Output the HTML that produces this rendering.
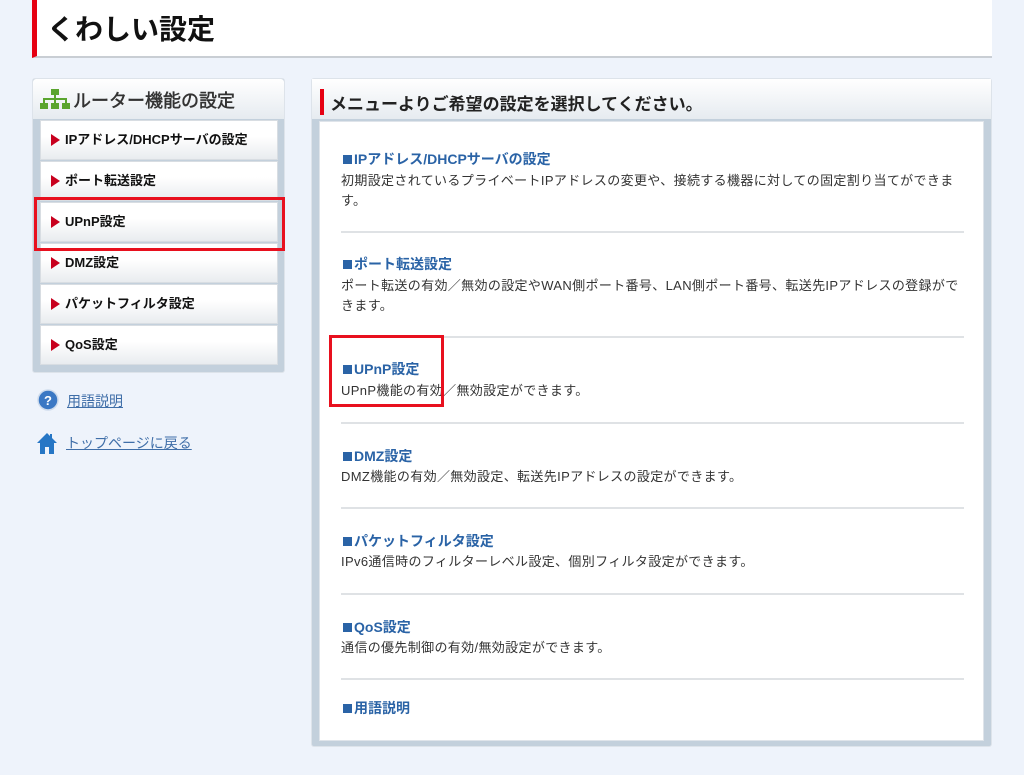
<!DOCTYPE html>
<html><head><meta charset="utf-8"><style>
*{margin:0;padding:0;box-sizing:border-box}
body{width:1024px;height:775px;background:#eef3fb;font-family:"Liberation Sans","Noto Sans CJK JP",sans-serif;position:relative;overflow:hidden;color:#222}
.abs{position:absolute}
#hdr{left:32px;top:0;width:960px;height:58px;background:#fff;border-left:5px solid #e60012;border-bottom:2px solid #c9ced4}
#hdr h1{position:absolute;left:10px;top:8px;font-size:28px;font-weight:bold;color:#111}
#lp{left:32px;top:78px;width:253px;height:295px;background:#c3d0dc;border:1px solid #dde3ea;border-radius:3px}
#lph{left:0;top:0;width:251px;height:40px;background:linear-gradient(#fff,#e6ebf0);border-radius:3px 3px 0 0}
#lph span{position:absolute;left:40px;top:8px;font-size:18px;color:#333;-webkit-text-stroke:0.5px #333}
.mi{position:absolute;left:7px;width:238px;height:40px;background:linear-gradient(#fff 40%,#e9ecef);border:1px solid #d8dde2;font-size:13px;font-weight:bold;color:#111;line-height:38px;padding-left:24px}
.mi:before{content:"";position:absolute;left:10px;top:13px;border-left:9px solid #c8001e;border-top:6px solid transparent;border-bottom:6px solid transparent}
#rp{left:311px;top:78px;width:681px;height:669px;background:#c3d0dc;border:1px solid #dde3ea;border-radius:3px}
#rph{left:0;top:0;width:679px;height:40px;background:linear-gradient(#fff,#e6ebf0)}
#rph:before{content:"";position:absolute;left:8px;top:10px;width:4px;height:26px;background:#e60012}
#rph span{position:absolute;left:18px;top:11px;font-size:17px;font-weight:bold;color:#222}
#rin{left:7px;top:42px;width:665px;height:620px;background:#fff;border:1px solid #dfe4ea}
.t{position:absolute;left:21px;font-size:14px;font-weight:bold;color:#2a63a6}
.t b{display:inline-block;width:9px;height:9px;background:#2a63a6;margin:0 2px 0 2px;vertical-align:0px}
.d{position:absolute;left:21px;font-size:13px;color:#333;line-height:20px;width:622px;letter-spacing:0.35px}
.hr{position:absolute;left:21px;width:623px;height:2px;background:#dfe2e5}
.red{position:absolute;border:3px solid #e8101e}
a{color:#3f6ea8;text-decoration:underline;font-size:14px}
</style></head><body>
<div id="hdr" class="abs"><h1>くわしい設定</h1></div>

<div id="lp" class="abs">
 <div id="lph" class="abs">
  <svg class="abs" style="left:7px;top:10px" width="30" height="22" viewBox="0 0 30 22"><g fill="#5aa52e"><rect x="11" y="0" width="8" height="6"/><rect x="14" y="6" width="2" height="4"/><rect x="3" y="9" width="24" height="2"/><rect x="3" y="9" width="2" height="5"/><rect x="25" y="9" width="2" height="5"/><rect x="14" y="9" width="2" height="5"/><rect x="0" y="14" width="8" height="6"/><rect x="11" y="14" width="8" height="6"/><rect x="22" y="14" width="8" height="6"/></g></svg>
  <span>ルーター機能の設定</span></div>
 <div class="mi" style="top:41px">IPアドレス/DHCPサーバの設定</div>
 <div class="mi" style="top:82px">ポート転送設定</div>
 <div class="mi" style="top:123px">UPnP設定</div>
 <div class="mi" style="top:164px">DMZ設定</div>
 <div class="mi" style="top:205px">パケットフィルタ設定</div>
 <div class="mi" style="top:246px">QoS設定</div>
</div>
<div class="red" style="left:34px;top:197px;width:251px;height:54px"></div>

<svg class="abs" style="left:37px;top:389px" width="22" height="22" viewBox="0 0 22 22"><circle cx="11" cy="11" r="10" fill="#3b78c4" stroke="#cfdced" stroke-width="1.5"/><text x="11" y="16" font-size="13" font-weight="bold" fill="#fff" text-anchor="middle" font-family="Liberation Sans">?</text></svg>
<a class="abs" style="left:67px;top:391px">用語説明</a>
<svg class="abs" style="left:37px;top:432px" width="20" height="23" viewBox="0 0 20 23"><path d="M10 1 L0 11 L3 11 L3 22 L8 22 L8 15 L12 15 L12 22 L17 22 L17 11 L20 11 L15 6 L15 2 L13 2 L13 4 Z" fill="#2676c5"/></svg>
<a class="abs" style="left:66px;top:433px">トップページに戻る</a>

<div id="rp" class="abs">
 <div id="rph" class="abs"><span>メニューよりご希望の設定を選択してください。</span></div>
 <div id="rin" class="abs">
  <div class="t" style="top:27px"><b></b>IPアドレス/DHCPサーバの設定</div>
  <div class="d" style="top:49px">初期設定されているプライベートIPアドレスの変更や、接続する機器に対しての固定割り当てができます。</div>
  <div class="hr" style="top:109px"></div>
  <div class="t" style="top:132px"><b></b>ポート転送設定</div>
  <div class="d" style="top:154px">ポート転送の有効／無効の設定やWAN側ポート番号、LAN側ポート番号、転送先IPアドレスの登録ができます。</div>
  <div class="hr" style="top:214px"></div>
  <div class="t" style="top:237px"><b></b>UPnP設定</div>
  <div class="d" style="top:259px">UPnP機能の有効／無効設定ができます。</div>
  <div class="hr" style="top:300px"></div>
  <div class="t" style="top:324px"><b></b>DMZ設定</div>
  <div class="d" style="top:345px">DMZ機能の有効／無効設定、転送先IPアドレスの設定ができます。</div>
  <div class="hr" style="top:385px"></div>
  <div class="t" style="top:409px"><b></b>パケットフィルタ設定</div>
  <div class="d" style="top:430px">IPv6通信時のフィルターレベル設定、個別フィルタ設定ができます。</div>
  <div class="hr" style="top:471px"></div>
  <div class="t" style="top:495px"><b></b>QoS設定</div>
  <div class="d" style="top:516px">通信の優先制御の有効/無効設定ができます。</div>
  <div class="hr" style="top:556px"></div>
  <div class="t" style="top:576px"><b></b>用語説明</div>
 </div>
</div>
<div class="red" style="left:329px;top:335px;width:115px;height:72px"></div>
</body></html>
